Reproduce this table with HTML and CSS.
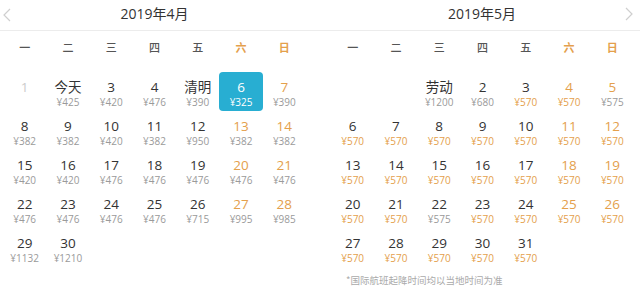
FILE: index.html
```html
<!DOCTYPE html>
<html lang="zh">
<head>
<meta charset="utf-8">
<link rel="stylesheet" href="styles.css">
</head>
<body>
<div class="cal">
  <div class="heads">
    <div class="head">
      <span class="arrow"><svg width="8" height="14" viewBox="0 0 8 14"><polyline points="7,1 1,7 7,13" fill="none" stroke="#cfcfcf" stroke-width="1.2"/></svg></span>
      <span class="title">2019年4月</span>
      <span class="arrow"></span>
    </div>
    <div class="head">
      <span class="arrow"></span>
      <span class="title">2019年5月</span>
      <span class="arrow right"><svg width="8" height="14" viewBox="0 0 8 14"><polyline points="1,1 7,7 1,13" fill="none" stroke="#cfcfcf" stroke-width="1.2"/></svg></span>
    </div>
  </div>
  <div class="months">
    <div class="month">
      <div class="week"><span>一</span><span>二</span><span>三</span><span>四</span><span>五</span><span class="we">六</span><span class="we">日</span></div>
      <div class="days">
        <div class="day off"><b>1</b><i></i></div>
        <div class="day"><b>今天</b><i>¥425</i></div>
        <div class="day"><b>3</b><i>¥420</i></div>
        <div class="day"><b>4</b><i>¥476</i></div>
        <div class="day"><b>清明</b><i>¥390</i></div>
        <div class="day sel"><b>6</b><i>¥325</i></div>
        <div class="day we"><b>7</b><i>¥390</i></div>

        <div class="day"><b>8</b><i>¥382</i></div>
        <div class="day"><b>9</b><i>¥382</i></div>
        <div class="day"><b>10</b><i>¥420</i></div>
        <div class="day"><b>11</b><i>¥382</i></div>
        <div class="day"><b>12</b><i>¥950</i></div>
        <div class="day we"><b>13</b><i>¥382</i></div>
        <div class="day we"><b>14</b><i>¥382</i></div>

        <div class="day"><b>15</b><i>¥420</i></div>
        <div class="day"><b>16</b><i>¥420</i></div>
        <div class="day"><b>17</b><i>¥476</i></div>
        <div class="day"><b>18</b><i>¥476</i></div>
        <div class="day"><b>19</b><i>¥476</i></div>
        <div class="day we"><b>20</b><i>¥476</i></div>
        <div class="day we"><b>21</b><i>¥476</i></div>

        <div class="day"><b>22</b><i>¥476</i></div>
        <div class="day"><b>23</b><i>¥476</i></div>
        <div class="day"><b>24</b><i>¥476</i></div>
        <div class="day"><b>25</b><i>¥476</i></div>
        <div class="day"><b>26</b><i>¥715</i></div>
        <div class="day we"><b>27</b><i>¥995</i></div>
        <div class="day we"><b>28</b><i>¥985</i></div>

        <div class="day"><b>29</b><i>¥1132</i></div>
        <div class="day"><b>30</b><i>¥1210</i></div>
      </div>
    </div>
    <div class="month">
      <div class="week"><span>一</span><span>二</span><span>三</span><span>四</span><span>五</span><span class="we">六</span><span class="we">日</span></div>
      <div class="days">
        <div class="day empty"></div>
        <div class="day empty"></div>
        <div class="day"><b>劳动</b><i>¥1200</i></div>
        <div class="day"><b>2</b><i>¥680</i></div>
        <div class="day low"><b>3</b><i>¥570</i></div>
        <div class="day we low"><b>4</b><i>¥570</i></div>
        <div class="day we"><b>5</b><i>¥575</i></div>

        <div class="day low"><b>6</b><i>¥570</i></div>
        <div class="day low"><b>7</b><i>¥570</i></div>
        <div class="day low"><b>8</b><i>¥570</i></div>
        <div class="day low"><b>9</b><i>¥570</i></div>
        <div class="day low"><b>10</b><i>¥570</i></div>
        <div class="day we low"><b>11</b><i>¥570</i></div>
        <div class="day we low"><b>12</b><i>¥570</i></div>

        <div class="day low"><b>13</b><i>¥570</i></div>
        <div class="day low"><b>14</b><i>¥570</i></div>
        <div class="day low"><b>15</b><i>¥570</i></div>
        <div class="day low"><b>16</b><i>¥570</i></div>
        <div class="day low"><b>17</b><i>¥570</i></div>
        <div class="day we low"><b>18</b><i>¥570</i></div>
        <div class="day we low"><b>19</b><i>¥570</i></div>

        <div class="day low"><b>20</b><i>¥570</i></div>
        <div class="day low"><b>21</b><i>¥570</i></div>
        <div class="day"><b>22</b><i>¥575</i></div>
        <div class="day low"><b>23</b><i>¥570</i></div>
        <div class="day low"><b>24</b><i>¥570</i></div>
        <div class="day we low"><b>25</b><i>¥570</i></div>
        <div class="day we low"><b>26</b><i>¥570</i></div>

        <div class="day low"><b>27</b><i>¥570</i></div>
        <div class="day low"><b>28</b><i>¥570</i></div>
        <div class="day low"><b>29</b><i>¥570</i></div>
        <div class="day low"><b>30</b><i>¥570</i></div>
        <div class="day low"><b>31</b><i>¥570</i></div>
      </div>
      <div class="note">*国际航班起降时间均以当地时间为准</div>
    </div>
  </div>
</div>
</body>
</html>
```

FILE: styles.css
```css
html, body {
  margin: 0;
  padding: 0;
  background: #ffffff;
}
body {
  font-family: "Open Sans", "Noto Sans CJK SC", sans-serif;
  color: #333;
  width: 640px;
  height: 289px;
  overflow: hidden;
}
.heads {
  display: flex;
  gap: 25px;
  padding: 0 5px 0 3px;
  height: 30px;
  border-bottom: 1px solid #ececec;
}
.head {
  width: 303px;
  display: flex;
  align-items: center;
  justify-content: space-between;
}
.arrow {
  width: 8px;
  height: 14px;
  display: flex;
  margin-top: 0;
}
.arrow.right {
  margin-right: 1px;
  margin-top: -2px;
}
.title {
  font-size: 14px;
  line-height: 20px;
  color: #333;
  margin-top: -3px;
}
.months {
  display: flex;
  gap: 25px;
  padding: 0 5px 0 3px;
}
.month {
  width: 303px;
}
.week {
  display: grid;
  grid-template-columns: repeat(7, 1fr);
  height: 32px;
  align-items: center;
  margin-bottom: 9px;
  font-family: "Noto Sans CJK SC", sans-serif;
  font-size: 11px;
  font-weight: 500;
  color: #555;
  text-align: center;
}
.week .we {
  color: #e4a04c;
  font-weight: 700;
}
.days {
  display: grid;
  grid-template-columns: repeat(7, 1fr);
  grid-auto-rows: 39px;
}
.day {
  display: flex;
  flex-direction: column;
  align-items: center;
  padding-top: 6px;
  box-sizing: border-box;
  border-radius: 4px;
}
.day b {
  font-weight: 400;
  font-size: 13.5px;
  line-height: 18px;
  color: #333;
}
.day i {
  font-style: normal;
  font-size: 10px;
  line-height: 12px;
  color: #9a9a9a;
}
.day.we b {
  color: #e4a04c;
}
.day.low i {
  color: #e4a04c;
}
.day.off b {
  color: #cccccc;
}
.day.sel {
  background: #28aed2;
}
.day.sel b,
.day.sel i {
  color: #ffffff;
}
.note {
  margin-top: 7px;
  padding-left: 15px;
  font-family: "Noto Sans CJK SC", sans-serif;
  font-size: 9.5px;
  line-height: 12px;
  color: #aaaaaa;
}
```
